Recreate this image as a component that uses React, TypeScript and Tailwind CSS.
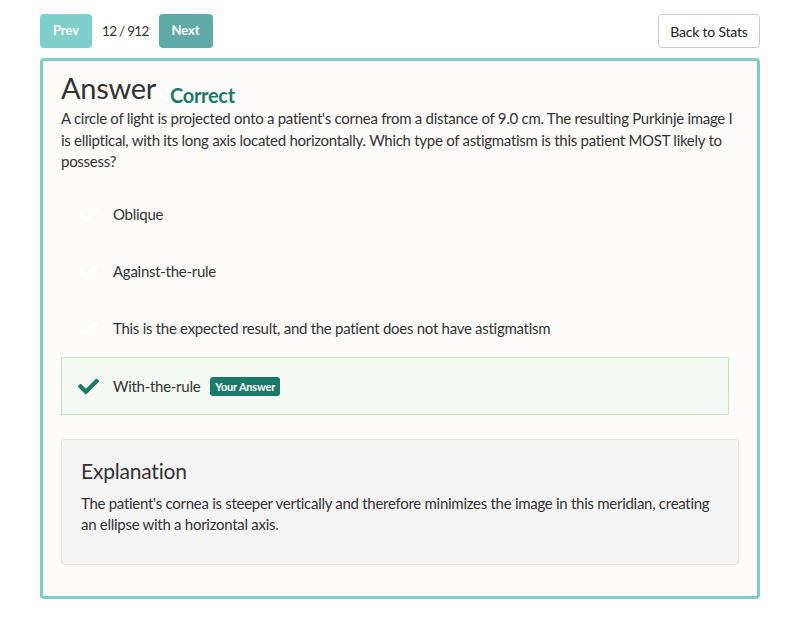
import React from 'react';
import { FaCheck } from 'react-icons/fa';

const options = [
  { text: 'Oblique', selected: false },
  { text: 'Against-the-rule', selected: false },
  { text: 'This is the expected result, and the patient does not have astigmatism', selected: false },
  { text: 'With-the-rule', selected: true },
];

export default function App() {
  return (
    <div className="min-h-[622px] bg-white px-10 pt-[14px] text-[#333] font-['Lato','Liberation_Sans',sans-serif]">
      <div className="flex items-center justify-between">
        <div className="flex items-center">
          <button className="h-[34px] w-[52px] rounded bg-[#7fcfcd] text-[13px] font-bold text-white">Prev</button>
          <span className="mx-[10px] text-[13.5px] tracking-[-0.7px] text-[#333]">12 / 912</span>
          <button className="h-[34px] w-[54px] rounded bg-[#5fa9a6] text-[13px] font-bold text-white">Next</button>
        </div>
        <button className="h-[34px] w-[102px] rounded border border-[#ccc] bg-white text-[14px] tracking-[-0.2px] text-[#222]">Back to Stats</button>
      </div>

      <div className="mt-[10px] rounded border-[3px] border-[#7ecdc9] bg-[#fdfcfb] px-[18px] pb-[31px] pt-[9px]">
        <div className="flex items-end">
          <h1 className="text-[29px] leading-[36px] tracking-[-0.3px] text-[#333]">Answer</h1>
          <span className="mb-[-4px] ml-[14px] text-[20px] font-bold tracking-[-0.3px] text-[#1a7a68]">Correct</span>
        </div>
        <p className="mt-[2px] text-[15px] leading-[21.5px] tracking-[-0.28px] text-[#333]">
          A circle of light is projected onto a patient's cornea from a distance of 9.0 cm. The resulting Purkinje image I is elliptical, with its long axis located horizontally. Which type of astigmatism is this patient MOST likely to possess?
        </p>

        <div className="mt-[13px] mr-[10px]">
          {options.map((o) => (
            <div
              key={o.text}
              className={
                o.selected
                  ? 'flex h-[58px] items-center border border-[#c3e3bd] bg-[#f4f9f3] pl-[16px] pt-[2px]'
                  : 'flex h-[57px] items-center border border-transparent pl-[16px]'
              }
            >
              <FaCheck className={o.selected ? 'h-[21px] w-[21px] text-[#1a7a68]' : 'h-[21px] w-[21px] text-white'} />
              <span className="ml-[14px] text-[15px] tracking-[-0.28px] text-[#333]">{o.text}</span>
              {o.selected && (
                <span className="ml-[10px] rounded-[3px] bg-[#1a7a68] px-[5px] py-[2px] text-[11px] font-bold leading-[15px] tracking-[-0.2px] text-white">
                  Your Answer
                </span>
              )}
            </div>
          ))}
        </div>

        <div className="mt-[24px] rounded border border-[#e3e3e3] bg-[#f4f4f4] px-[19px] pb-[28px] pt-[16px]">
          <h2 className="text-[21px] leading-[30px] tracking-[-0.2px] text-[#333]">Explanation</h2>
          <p className="mt-[7px] text-[15px] leading-[21.5px] tracking-[-0.28px] text-[#333]">
            The patient's cornea is steeper vertically and therefore minimizes the image in this meridian, creating an ellipse with a horizontal axis.
          </p>
        </div>
      </div>
    </div>
  );
}
